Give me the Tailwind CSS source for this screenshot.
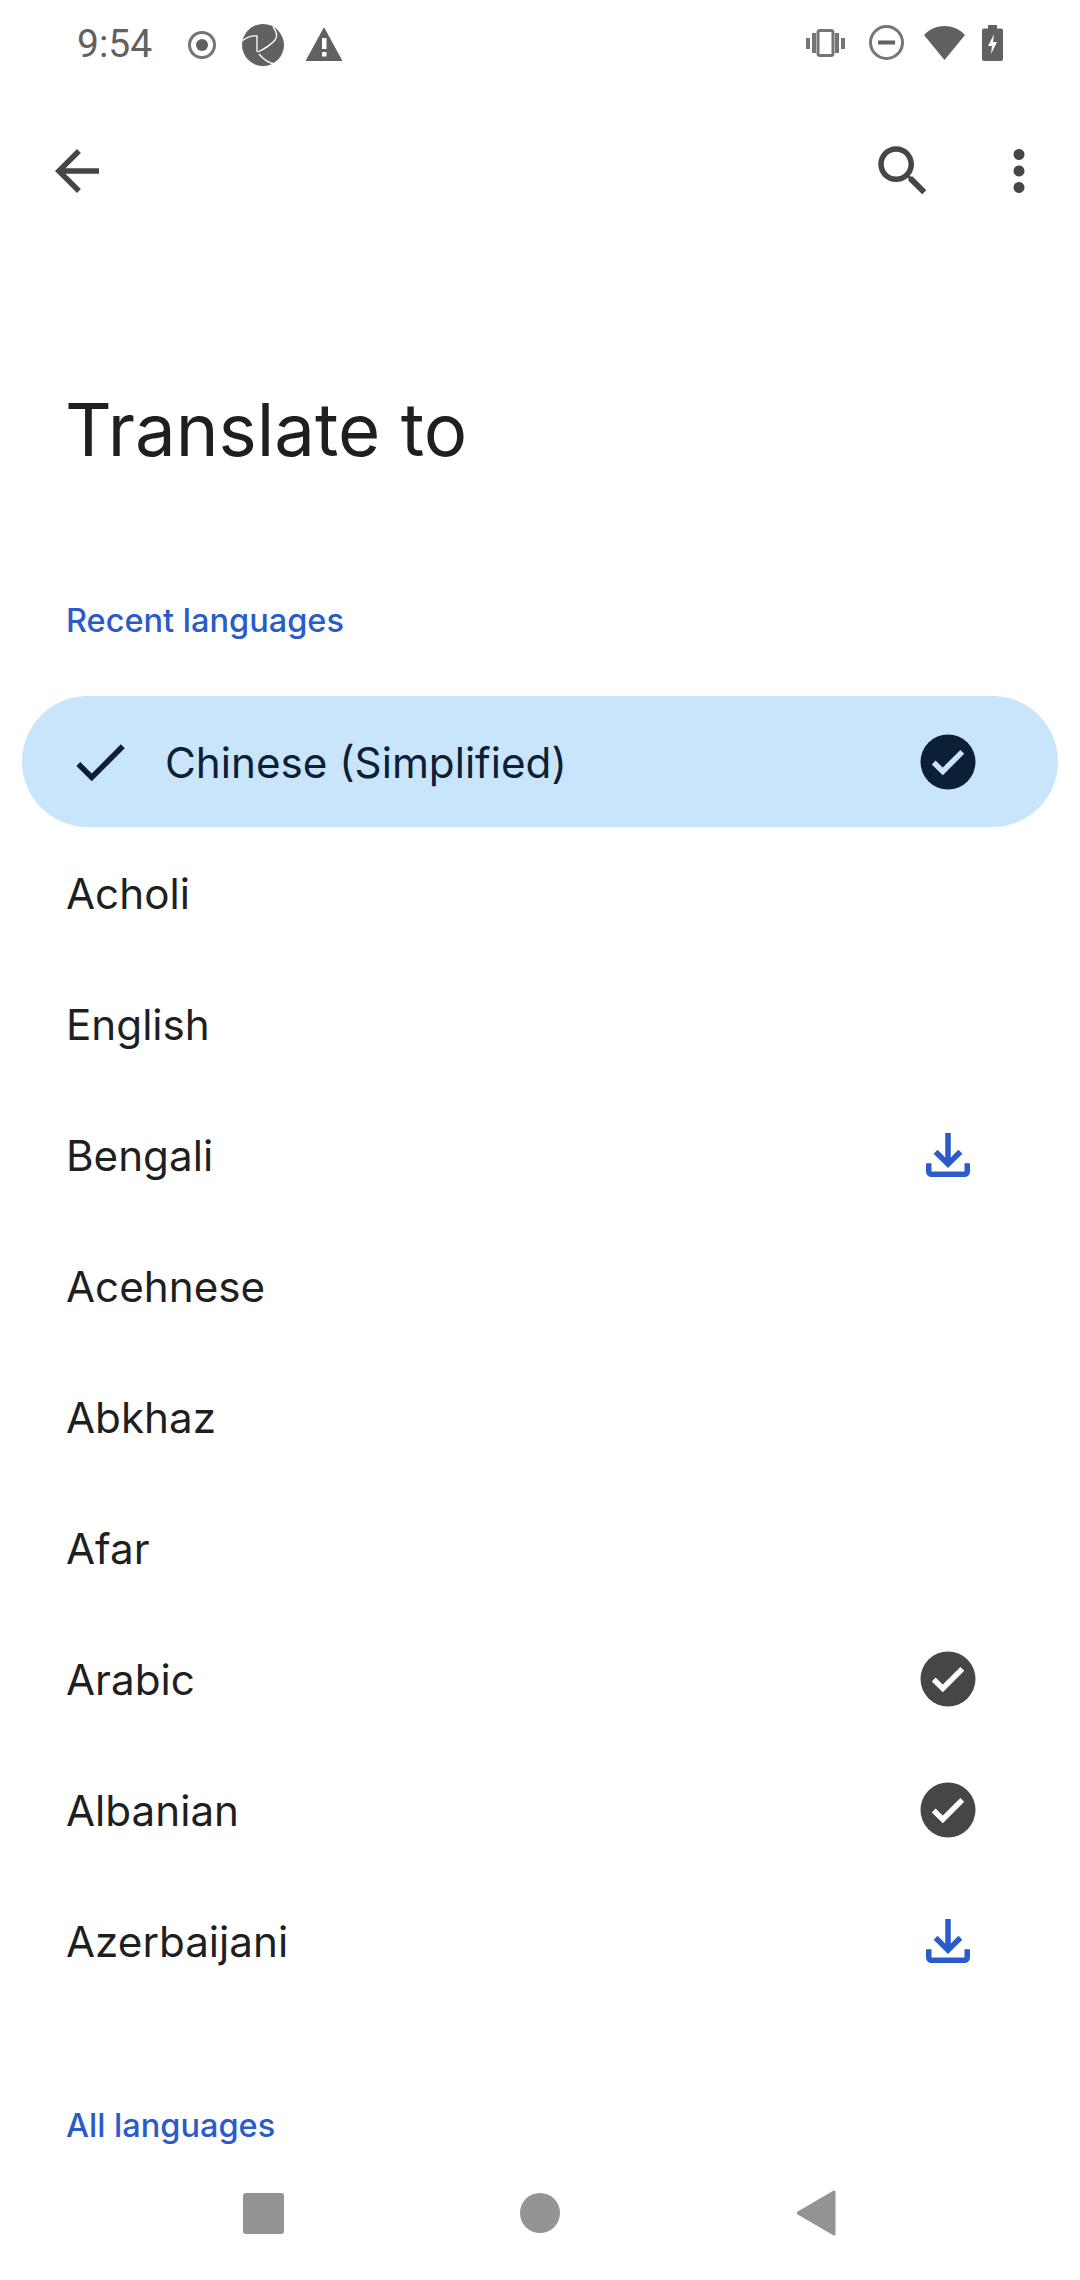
<!doctype html>
<html><head><meta charset="utf-8"><script src="https://cdn.jsdelivr.net/npm/@tailwindcss/browser@4"></script></head>
<body class="bg-white">
<div class="w-[1080px] h-[2280px] flex flex-col overflow-hidden bg-white font-['Inter',sans-serif] text-[#1f1f1f]">
  <!-- status bar -->
  <div class="h-[88px] shrink-0 flex items-center justify-between pl-[78px] pr-[77px] text-[#616161]">
    <div class="flex items-center mt-[1px] font-['Roboto',sans-serif]">
      <span class="text-[39px] leading-none w-[110px] -ml-[1px] mr-[1px]">9:54</span>
      <svg class="w-[28px] h-[28px]" viewBox="0 0 28 28"><circle cx="14" cy="14" r="12.5" fill="none" stroke="#757575" stroke-width="3"/><circle cx="14" cy="14" r="6" fill="#616161"/></svg>
      <svg class="w-[42px] h-[42px] ml-[26px]" viewBox="0 0 42 42"><circle cx="21" cy="21" r="21" fill="#616161"/><g fill="none" stroke="#fff" stroke-width="1.3"><path d="M0 17C5 13 10 11.500 15 12V28"/><path d="M31 3C35 8 36 12 33 16C29 21 24 24 16 28"/><path d="M17 30C21 35 26 39 33 40"/></g></svg>
      <svg class="w-[36px] h-[33px] ml-[22px]" viewBox="0 0 36 33"><path d="M18 0 L36 33 H0Z" fill="#616161" stroke="#616161" stroke-linejoin="round"/><rect x="16" y="10" width="4.5" height="11" fill="#fff"/><rect x="16" y="24" width="4.5" height="4.5" fill="#fff"/></svg>
    </div>
    <div class="flex items-center -mt-[3px]">
      <svg class="w-[39px] h-[28px]" viewBox="0 0 39 28"><g fill="#757575"><rect x="0" y="9" width="4" height="11"/><rect x="6" y="4" width="4" height="20"/><rect x="29" y="4" width="4" height="20"/><rect x="35" y="9" width="4" height="11"/></g><rect x="12" y="1.5" width="15" height="25" rx="2" fill="none" stroke="#757575" stroke-width="3"/></svg>
      <svg class="w-[35px] h-[35px] ml-[24px]" viewBox="0 0 35 35"><circle cx="17.500" cy="17.500" r="16" fill="none" stroke="#757575" stroke-width="3"/><rect x="9" y="15.500" width="17" height="4" fill="#616161"/></svg>
      <svg class="w-[41px] h-[34px] ml-[20px]" viewBox="0 0 41 34"><path d="M0 9 C11 -3 30 -3 41 9 L20.500 34Z" fill="#616161"/></svg>
      <svg class="w-[21px] h-[36px] ml-[17px]" viewBox="0 0 21 36"><path d="M6 0h9v3.500h4a2 2 0 0 1 2 2V34a2 2 0 0 1-2 2H2a2 2 0 0 1-2-2V5.500a2 2 0 0 1 2-2h4z" fill="#616161"/><path d="M12 9 L6 21 H10 L9 29 L15 17 H11Z" fill="#fff"/></svg>
    </div>
  </div>
  <!-- toolbar -->
  <div class="h-[166px] shrink-0 flex items-center pl-[44px] pr-[28px]">
    <svg class="w-[66px] h-[66px] fill-[#444746]" viewBox="0 0 24 24"><path d="M20 11H7.830l5.590-5.590L12 4l-8 8 8 8 1.410-1.410L7.830 13H20v-2z"/></svg>
    <svg class="w-[66px] h-[66px] ml-auto fill-[#444746]" viewBox="0 0 24 24"><path d="M15.500 14h-.79l-.28-.27C15.410 12.590 16 11.110 16 9.500 16 5.910 13.090 3 9.500 3S3 5.910 3 9.500 5.910 16 9.500 16c1.610 0 3.090-.59 4.230-1.570l.27.28v.79l5 4.990L20.490 19l-4.990-5zm-6 0C7.010 14 5 11.990 5 9.500S7.010 5 9.500 5 14 7.010 14 9.500 11.990 14 9.500 14z"/></svg>
    <svg class="w-[66px] h-[66px] ml-[50px] fill-[#444746]" viewBox="0 0 24 24"><path d="M12 8c1.100 0 2-.9 2-2s-.9-2-2-2-2 .9-2 2 .9 2 2 2zm0 2c-1.100 0-2 .9-2 2s.9 2 2 2 2-.9 2-2-.9-2-2-2zm0 6c-1.100 0-2 .9-2 2s.9 2 2 2 2-.9 2-2-.9-2-2-2z"/></svg>
  </div>
  <main class="flex-1 overflow-hidden">
    <h1 class="mt-[126px] pl-[65px] text-[72.500px] leading-[100px] font-normal">Translate to</h1>
    <h2 class="mt-[119px] pl-[66px] text-[32.500px] leading-[44px] font-[450] text-[#2a5bca]">Recent languages</h2>
    <ul class="mt-[53px] text-[42.200px] font-normal [&_span]:pt-[2px]">
      <li class="h-[131px] mx-[22px] rounded-full bg-[#c8e5fc] text-[#0b1f35] flex items-center pl-[45px] pr-[77px]">
        <svg class="w-[66px] h-[66px] fill-[#0b1f35]" viewBox="0 0 24 24"><path d="M9 16.170L4.830 12l-1.420 1.410L9 19 21 7l-1.410-1.410z"/></svg>
        <span class="ml-[32px]">Chinese (Simplified)</span>
        <svg class="w-[66px] h-[66px] ml-auto" viewBox="0 0 24 24"><circle cx="12" cy="12" r="10" fill="#0b1f35"/><path d="M6.800 12.200l3.300 3.200 7.100-7.100" fill="none" stroke="#c8e5fc" stroke-width="2"/></svg>
      </li>
      <li class="h-[131px] flex items-center pl-[66px] pr-[99px]"><span>Acholi</span></li>
      <li class="h-[131px] flex items-center pl-[66px] pr-[99px]"><span>English</span></li>
      <li class="h-[131px] flex items-center pl-[66px] pr-[99px]"><span>Bengali</span>
        <svg class="w-[66px] h-[66px] ml-auto" viewBox="0 0 24 24"><g fill="none" stroke="#2a5bca" stroke-width="2"><path d="M12 4v11.500"/><path d="M7.500 10.800l4.500 4.500 4.500-4.500"/><path d="M5 15v3a1 1 0 0 0 1 1h12a1 1 0 0 0 1-1v-3"/></g></svg>
      </li>
      <li class="h-[131px] flex items-center pl-[66px] pr-[99px]"><span>Acehnese</span></li>
      <li class="h-[131px] flex items-center pl-[66px] pr-[99px]"><span>Abkhaz</span></li>
      <li class="h-[131px] flex items-center pl-[66px] pr-[99px]"><span>Afar</span></li>
      <li class="h-[131px] flex items-center pl-[66px] pr-[99px]"><span>Arabic</span>
        <svg class="w-[66px] h-[66px] ml-auto" viewBox="0 0 24 24"><circle cx="12" cy="12" r="10" fill="#444746"/><path d="M6.800 12.200l3.300 3.200 7.100-7.100" fill="none" stroke="#fff" stroke-width="2"/></svg>
      </li>
      <li class="h-[131px] flex items-center pl-[66px] pr-[99px]"><span>Albanian</span>
        <svg class="w-[66px] h-[66px] ml-auto" viewBox="0 0 24 24"><circle cx="12" cy="12" r="10" fill="#444746"/><path d="M6.800 12.200l3.300 3.200 7.100-7.100" fill="none" stroke="#fff" stroke-width="2"/></svg>
      </li>
      <li class="h-[131px] flex items-center pl-[66px] pr-[99px]"><span>Azerbaijani</span>
        <svg class="w-[66px] h-[66px] ml-auto" viewBox="0 0 24 24"><g fill="none" stroke="#2a5bca" stroke-width="2"><path d="M12 4v11.500"/><path d="M7.500 10.800l4.500 4.500 4.500-4.500"/><path d="M5 15v3a1 1 0 0 0 1 1h12a1 1 0 0 0 1-1v-3"/></g></svg>
      </li>
    </ul>
    <h2 class="mt-[98px] pl-[66px] text-[32.500px] leading-[44px] font-[450] text-[#2a5bca]">All languages</h2>
  </main>
  <nav class="h-[120px] shrink-0 grid grid-cols-3 items-center justify-items-center px-[125px] pb-[14px] bg-white">
    <div class="w-[41px] h-[41px] rounded-[3px] bg-[#949494]"></div>
    <div class="w-[40px] h-[40px] rounded-full bg-[#949494]"></div>
    <svg class="w-[40px] h-[46px]" viewBox="0 0 40 46"><path d="M37 2 V44 L1 23Z" fill="#949494" stroke="#949494" stroke-width="3" stroke-linejoin="round"/></svg>
  </nav>
</div>
</body></html>
